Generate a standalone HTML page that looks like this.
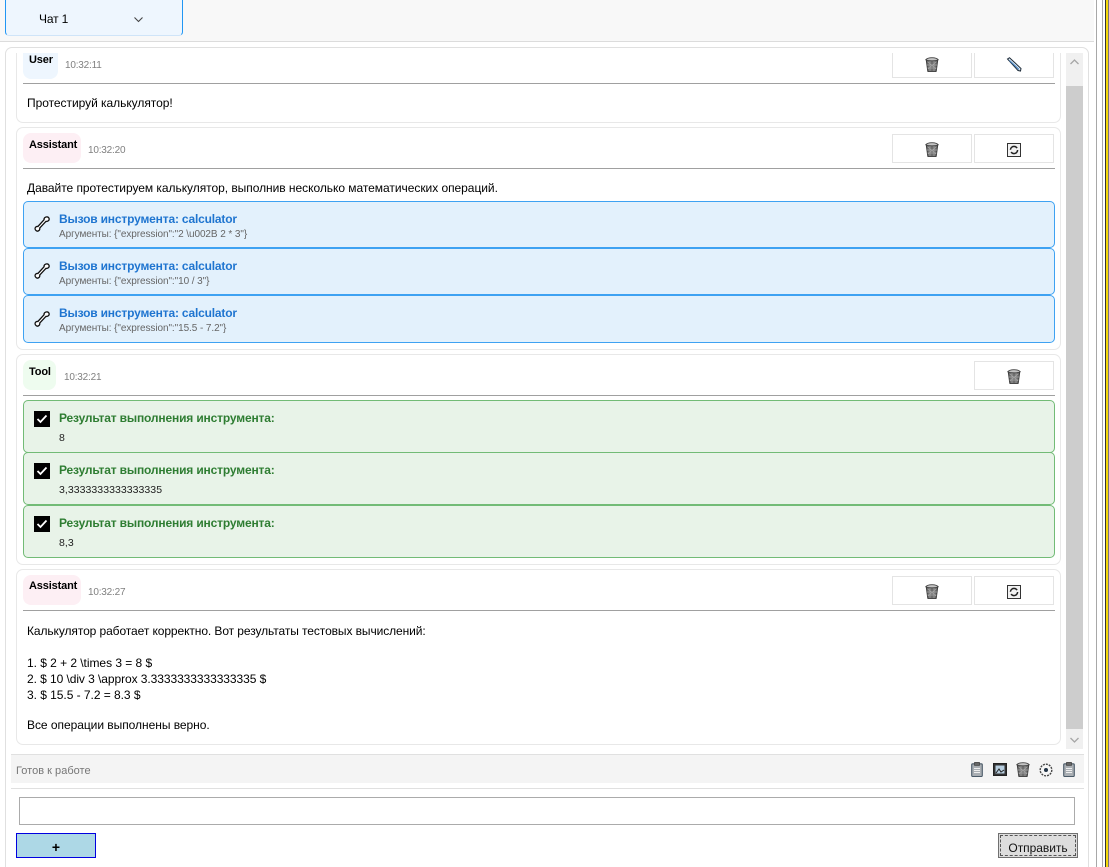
<!DOCTYPE html>
<html><head><meta charset="utf-8"><style>
html,body{margin:0;padding:0;background:#fff;overflow:hidden}
body{width:1109px;height:867px;position:relative;font-family:"Liberation Sans",sans-serif;font-size:12px;color:#000}
.a{position:absolute;box-sizing:border-box}
.t{position:absolute;white-space:nowrap;line-height:14px;letter-spacing:-.04px}
.card{position:absolute;box-sizing:border-box;left:16px;width:1045px;border:1px solid #e8e8e8;border-radius:7px;background:#fff}
.btn{position:absolute;box-sizing:border-box;width:80px;height:29px;border:1px solid #e4e4e4;background:#fff}
.hr{position:absolute;left:23px;width:1032px;height:1px;background:#a0a0a0}
.badge{position:absolute;left:23px;border-radius:8px}
.b{font-weight:bold;font-size:11px;letter-spacing:-.15px}
.time{font-size:10px;color:#808080;letter-spacing:-.2px}
.call{position:absolute;box-sizing:border-box;left:23px;width:1032px;height:47px;background:#e3f1fc;border:1px solid #3ea2f2;border-radius:5px}
.ct{position:absolute;left:59px;font-weight:bold;color:#1f75d0;font-size:12px;white-space:nowrap;line-height:14px;letter-spacing:-.17px}
.cs{position:absolute;left:59px;color:#666;font-size:10px;white-space:nowrap;line-height:12px;letter-spacing:-.08px}
.res{position:absolute;box-sizing:border-box;left:23px;width:1032px;background:#e8f3e8;border:1px solid #72bb76;border-radius:5px}
.rt{position:absolute;left:59px;font-weight:bold;color:#2e7d32;font-size:12px;white-space:nowrap;line-height:14px;letter-spacing:-.16px}
.rv{position:absolute;left:59px;font-size:10.5px;color:#222;white-space:nowrap;line-height:12px;letter-spacing:.05px}
.chk{position:absolute;left:34px;width:16px;height:16px;background:#000}
svg{position:absolute;overflow:visible}
</style></head><body>
<svg width="0" height="0" style="position:absolute"><defs>
<symbol id="trash" viewBox="0 0 14 15"><path d="M1.200 2.500h11.600l-1.600 11.700a1 1 0 0 1-1 .6H3.800a1 1 0 0 1-1-.6z" fill="#6e6e6e" stroke="#3d3d3d" stroke-width="1"/><path d="M3 5l8 7M11 5l-8 7M5 4v10M9 4v10M2 8h10M2.500 11h9" stroke="#a8a8a8" stroke-width=".7"/><path d="M.8 2.800c2-2.800 10.400-2.800 12.400 0c-2 1.400-10.400 1.400-12.400 0z" fill="#c4c4c4" stroke="#444" stroke-width=".9"/></symbol>
<symbol id="clip" viewBox="0 0 12 15"><rect x=".7" y="1.800" width="10.600" height="12.700" rx="1" fill="#a9aeb3" stroke="#4a5a68" stroke-width="1.100"/><rect x="3.500" y=".4" width="5" height="3" fill="#666" stroke="#333" stroke-width=".6"/><path d="M3 6.500h6M3 8.500h6M3 10.500h6" stroke="#eee"/></symbol>
<symbol id="wrench" viewBox="0 0 16 18"><path d="M11.500 2.200c1.200-.7 2.800-.3 3.400.9.500 1 .2 2.100-.7 2.800-.8.600-1.700.6-2.300.5L5.700 13c.2.800.1 1.700-.6 2.400-.9.800-2.200.9-3.100.1-1-.8-1.200-2.100-.5-3.100.6-.8 1.500-1.100 2.400-.9l6.200-6.800c-.2-.9.200-1.900 1.400-2.500z" fill="#fff" stroke="#111" stroke-width="1.300"/></symbol>
<symbol id="reload" viewBox="0 0 14 14"><rect x=".5" y=".5" width="13" height="13" fill="#f2f2f2" stroke="#333"/><circle cx="7" cy="7" r="3.600" fill="none" stroke="#222" stroke-width="1.500" stroke-dasharray="9 2.500"/></symbol>
</defs></svg>

<!-- top bar -->
<div class="a" style="left:0;top:0;width:1094px;height:42px;background:#f8f8f8;border-bottom:1px solid #dcdcdc"></div>
<div class="a" style="left:5px;top:-4px;width:178px;height:40px;background:#eef6fe;border:1px solid #2196f3;border-bottom-color:#cfe4f8;border-radius:4px"></div>
<div class="t" style="left:39px;top:12px;font-size:12px;letter-spacing:-.15px">Чат 1</div>
<svg style="left:134px;top:17px" width="9" height="6"><path d="M.5.500L4.500 4.500L8.500.500" fill="none" stroke="#444" stroke-width="1.100"/></svg>

<!-- outer frame -->
<div class="a" style="left:5px;top:47px;width:1084px;height:820px;border:1px solid #e0e0e0;border-bottom:0;border-radius:7px 7px 0 0"></div>
<div class="a" style="left:1096px;top:0;width:1px;height:867px;background:#a8a8a8"></div>
<div class="a" style="left:1102px;top:0;width:1px;height:867px;background:#a8a8a8"></div>
<div class="a" style="left:1105px;top:0;width:1px;height:867px;background:#333"></div>
<div class="a" style="left:1106px;top:0;width:2px;height:867px;background:#f5d90a"></div>
<div class="a" style="left:1108px;top:0;width:1px;height:867px;background:#777"></div>

<!-- scrollbar -->
<div class="a" style="left:1066px;top:53px;width:17px;height:696px;background:#f0f0f0"></div>
<div class="a" style="left:1066px;top:86px;width:17px;height:643px;background:#cdcdcd"></div>
<svg style="left:1070px;top:59px" width="9" height="6"><path d="M.5 5L4.500 1L8.500 5" fill="none" stroke="#a6a6a6" stroke-width="1.300"/></svg>
<svg style="left:1070px;top:737px" width="9" height="6"><path d="M.5 1L4.500 5L8.500 1" fill="none" stroke="#a6a6a6" stroke-width="1.300"/></svg>

<!-- card 1 (clipped at the top by scroll viewport) -->
<div class="a" style="left:16px;top:53px;width:1045px;height:70px;overflow:hidden">
  <div class="card" style="left:0;top:-20px;height:90px"></div>
  <div class="badge" style="left:7px;top:-10px;width:35px;height:36px;background:#eef6fe"></div>
  <div class="btn" style="left:876px;top:-5px;height:30px"></div>
  <div class="btn" style="left:958px;top:-5px;height:30px"></div>
</div>
<div class="t b" style="left:29px;top:53px">User</div>
<div class="t time" style="left:65px;top:59px">10:32:11</div>
<svg style="left:925px;top:57px" width="14" height="15"><use href="#trash"/></svg>
<svg style="left:1006px;top:57px" width="16" height="15"><path d="M1.500 2L3.500 .7L15 11.500L14.500 14L12 13.500Z" fill="#e4edf5" stroke="#1c2a38" stroke-width="1"/><path d="M3.500 3.500L13 12.500" stroke="#4b87c5" stroke-width="1.200"/></svg>
<div class="hr" style="top:83px"></div>
<div class="t" style="left:27px;top:96px">Протестируй калькулятор!</div>

<!-- card 2 -->
<div class="card" style="top:127px;height:223px"></div>
<div class="badge" style="top:133px;width:58px;height:30px;background:#fdeff4"></div>
<div class="t b" style="left:29px;top:138px">Assistant</div>
<div class="t time" style="left:88px;top:144px">10:32:20</div>
<div class="btn" style="left:892px;top:134px"></div>
<div class="btn" style="left:974px;top:134px"></div>
<svg style="left:925px;top:142px" width="14" height="15"><use href="#trash"/></svg>
<svg style="left:1007px;top:143px" width="14" height="14"><use href="#reload"/></svg>
<div class="hr" style="top:168px"></div>
<div class="t" style="left:27px;top:181px">Давайте протестируем калькулятор, выполнив несколько математических операций.</div>

<div class="call" style="top:201px"></div>
<svg style="left:34px;top:215px" width="16" height="18"><use href="#wrench"/></svg>
<div class="ct" style="top:212px">Вызов инструмента: calculator</div>
<div class="cs" style="top:229px">Аргументы: {"expression":"2 \u002B 2 * 3"}</div>

<div class="call" style="top:248px"></div>
<svg style="left:34px;top:262px" width="16" height="18"><use href="#wrench"/></svg>
<div class="ct" style="top:259px">Вызов инструмента: calculator</div>
<div class="cs" style="top:276px">Аргументы: {"expression":"10 / 3"}</div>

<div class="call" style="top:295px;height:48px"></div>
<svg style="left:34px;top:310px" width="16" height="18"><use href="#wrench"/></svg>
<div class="ct" style="top:306px">Вызов инструмента: calculator</div>
<div class="cs" style="top:323px">Аргументы: {"expression":"15.5 - 7.2"}</div>

<!-- card 3 -->
<div class="card" style="top:354px;height:211px"></div>
<div class="badge" style="top:360px;width:33px;height:30px;background:#eefcef"></div>
<div class="t b" style="left:29px;top:365px">Tool</div>
<div class="t time" style="left:64px;top:371px">10:32:21</div>
<div class="btn" style="left:974px;top:361px"></div>
<svg style="left:1007px;top:369px" width="14" height="15"><use href="#trash"/></svg>
<div class="hr" style="top:395px"></div>

<div class="res" style="top:400px;height:53px"></div>
<div class="chk" style="top:411px"></div>
<svg style="left:34px;top:411px" width="16" height="16"><path d="M3.500 8L6.500 11L12.500 4.500" fill="none" stroke="#fff" stroke-width="1.800"/></svg>
<div class="rt" style="top:411px">Результат выполнения инструмента:</div>
<div class="rv" style="top:432px">8</div>

<div class="res" style="top:452px;height:53px"></div>
<div class="chk" style="top:463px"></div>
<svg style="left:34px;top:463px" width="16" height="16"><path d="M3.500 8L6.500 11L12.500 4.500" fill="none" stroke="#fff" stroke-width="1.800"/></svg>
<div class="rt" style="top:463px">Результат выполнения инструмента:</div>
<div class="rv" style="top:484px">3,3333333333333335</div>

<div class="res" style="top:505px;height:53px"></div>
<div class="chk" style="top:516px"></div>
<svg style="left:34px;top:516px" width="16" height="16"><path d="M3.500 8L6.500 11L12.500 4.500" fill="none" stroke="#fff" stroke-width="1.800"/></svg>
<div class="rt" style="top:516px">Результат выполнения инструмента:</div>
<div class="rv" style="top:537px">8,3</div>

<!-- card 4 -->
<div class="card" style="top:569px;height:176px"></div>
<div class="badge" style="top:575px;width:58px;height:30px;background:#fdeff4"></div>
<div class="t b" style="left:29px;top:579px">Assistant</div>
<div class="t time" style="left:88px;top:586px">10:32:27</div>
<div class="btn" style="left:892px;top:576px"></div>
<div class="btn" style="left:974px;top:576px"></div>
<svg style="left:925px;top:584px" width="14" height="15"><use href="#trash"/></svg>
<svg style="left:1007px;top:585px" width="14" height="14"><use href="#reload"/></svg>
<div class="hr" style="top:610px"></div>
<div class="t" style="left:27px;top:624px;letter-spacing:-.09px">Калькулятор работает корректно. Вот результаты тестовых вычислений:</div>
<div class="t" style="left:27px;top:656px">1. $ 2 + 2 \times 3 = 8 $</div>
<div class="t" style="left:27px;top:672px;letter-spacing:-.07px">2. $ 10 \div 3 \approx 3.3333333333333335 $</div>
<div class="t" style="left:27px;top:688px">3. $ 15.5 - 7.2 = 8.3 $</div>
<div class="t" style="left:27px;top:718px">Все операции выполнены верно.</div>

<!-- status -->
<div class="a" style="left:11px;top:754px;width:1073px;height:29px;background:#f4f4f4;border-top:1px solid #e0e0e0"></div>
<div class="t" style="left:16px;top:764px;font-size:11px;color:#777;letter-spacing:.02px">Готов к работе</div>
<svg style="left:971px;top:762px" width="12" height="15"><use href="#clip"/></svg>
<svg style="left:993px;top:763px" width="14" height="13"><rect x=".5" y=".5" width="13" height="12" fill="#333" stroke="#222"/><rect x="2.500" y="2.500" width="9" height="8" fill="#b8cfe0"/><path d="M3 10l3-4 2 3 3-2" stroke="#222" fill="none"/></svg>
<svg style="left:1016px;top:762px" width="14" height="15"><use href="#trash"/></svg>
<svg style="left:1039px;top:763px" width="14" height="14"><circle cx="7" cy="7" r="5.800" fill="#f6f6f6" stroke="#444" stroke-width="1.400" stroke-dasharray="2 1"/><circle cx="7" cy="7" r="2" fill="#234"/></svg>
<svg style="left:1063px;top:762px" width="12" height="15"><use href="#clip"/></svg>
<div class="a" style="left:11px;top:788px;width:1073px;height:1px;background:#e0e0e0"></div>

<!-- input -->
<div class="a" style="left:19px;top:797px;width:1056px;height:28px;background:#fff;border:1px solid #ababab"></div>
<div class="a" style="left:16px;top:833px;width:80px;height:25px;background:#add8e6;border:1px solid #0000e0"></div>
<div class="t" style="left:16px;top:840px;width:80px;text-align:center;font-weight:bold;font-size:14px">+</div>
<div class="a" style="left:998px;top:833px;width:80px;height:25px;background:#dddddd;border:1px solid #707070"></div>
<div class="a" style="left:1000px;top:835px;width:76px;height:21px;border:1px dashed #555"></div>
<div class="t" style="left:998px;top:841px;width:80px;text-align:center;font-size:12px;color:#111">Отправить</div>
</body></html>
